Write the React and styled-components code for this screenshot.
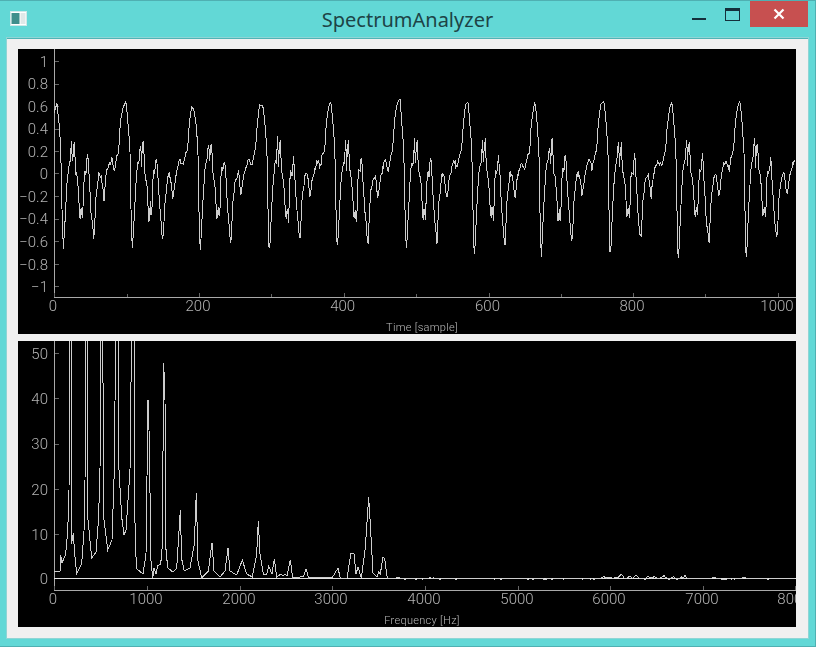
import React from "react";
import styled, { createGlobalStyle } from "styled-components";

const GlobalStyle = createGlobalStyle`
  html, body {
    margin: 0;
    padding: 0;
    background: #62d8d6;
  }
`;

const Window = styled.div`
  box-sizing: border-box;
  width: 816px;
  height: 647px;
  padding: 0 7px 8px 7px;
  display: flex;
  flex-direction: column;
  background: #62d8d6;
  border: solid #4fb0b2;
  border-width: 1px 1px 1px 0;
  overflow: hidden;
`;

const TitleBar = styled.div`
  height: 37px;
  flex: none;
  display: grid;
  grid-template-columns: 1fr auto 1fr;
`;

const AppIcon = styled.svg`
  width: 17px;
  height: 15px;
  margin: 10px 0 0 3px;
`;

const Title = styled.div`
  font-family: "Noto Sans", sans-serif;
  font-size: 20px;
  line-height: 38px;
  color: #1d4446;
`;

const Controls = styled.div`
  display: flex;
  justify-content: flex-end;
  align-items: flex-start;
`;

const MinButton = styled.div`
  width: 14px;
  height: 2px;
  margin: 17px 19px 0 0;
  background: #14303c;
`;

const MaxButton = styled.div`
  box-sizing: border-box;
  width: 15px;
  height: 13px;
  margin: 7px 10px 0 0;
  border: 1px solid #14303c;
  border-top-width: 3px;
`;

const CloseButton = styled.div`
  width: 58px;
  height: 26px;
  display: flex;
  align-items: center;
  justify-content: center;
  background: #c75050;
`;

const Client = styled.div`
  flex: 1;
  min-height: 0;
  box-sizing: border-box;
  padding: 10px 11px 11px 11px;
  display: flex;
  flex-direction: column;
  gap: 7px;
  background: #f0f0f0;
  border-top: 1px solid #50b4b6;
  outline: 1px solid #8fd5d5;
`;

const PlotFrame = styled.svg`
  display: block;
  flex: none;
  width: 778px;
  height: ${(p) => p.$height}px;
  background: #000;
`;

const Trace = styled.polyline`
  fill: none;
  stroke: #cdcdcd;
  stroke-width: 1;
  shape-rendering: crispEdges;
`;

const Axis = styled.line`
  stroke: #a9a9a9;
  stroke-width: 1;
  shape-rendering: crispEdges;
`;

const ZeroLine = styled.line`
  stroke: #e2e2e2;
  stroke-width: 1;
  shape-rendering: crispEdges;
`;

const Tick = styled.line`
  stroke: #666;
  stroke-width: 1;
  shape-rendering: crispEdges;
`;

const TickLabel = styled.text`
  font-family: Roboto, "Liberation Sans", sans-serif;
  font-weight: 300;
  font-size: 15px;
  fill: #b4b4b4;
  filter: grayscale(1);
  text-anchor: ${(p) => p.$anchor || "middle"};
`;

const AxisTitle = styled.text`
  font-family: Roboto, "Liberation Sans", sans-serif;
  font-weight: 300;
  font-size: 11px;
  letter-spacing: 0.3px;
  fill: #bcbcbc;
  filter: grayscale(1);
  text-anchor: middle;
`;

const rnd = (i) => {
  const v = Math.sin(i * 12.9898) * 43758.5453;
  return v - Math.floor(v);
};

// one pitch period, traced from the waveform: dx from the peak, y on the page
const PERIOD = [
  [0, 102], [2.3, 127], [4, 153], [4.7, 200], [6.3, 252], [8.3, 217], [10, 183],
  [11.3, 167], [13.3, 160], [14.7, 136], [15.5, 168], [16, 150], [17.6, 138],
  [18.3, 168], [19.3, 173], [21, 183], [23, 221], [24.3, 206], [25.5, 222],
  [27.3, 170], [29, 173], [30.6, 154], [32.3, 183], [34.3, 217], [37, 243],
  [39, 200], [42, 175], [44.6, 176], [47, 199], [49.3, 175], [52.3, 165],
  [54.6, 160], [57.3, 169], [59.6, 156], [61.6, 150], [63.3, 123], [65.6, 107],
];

const PEAKS = [57, 126, 194, 263, 331, 400, 468, 535, 604, 672, 740];
const PEAK_Y = [103, 101, 110, 106, 102, 98, 102, 101, 101, 102, 101];
const TROUGH_Y = [251, 251, 251, 256, 252, 254, 262, 259, 262, 267, 263];

// 1024 samples over 741px
const SAMPLE_STEP = 0.724;

const wavePoints = () => {
  const knots = [[54, 113]];
  PEAKS.forEach((px, p) => {
    PERIOD.forEach(([dx, y], i) => {
      let yy = y + (rnd(p * 77 + i + 3) - 0.5) * 6;
      if (i === 0) yy = PEAK_Y[p];
      if (i === 4) yy = TROUGH_Y[p];
      knots.push([px + dx, yy]);
    });
  });
  const pts = [];
  let k = 0;
  for (let n = 0; n < 1024; n++) {
    const x = 54 + n * SAMPLE_STEP;
    while (k < knots.length - 2 && knots[k + 1][0] < x) k++;
    const [x0, y0] = knots[k];
    const [x1, y1] = knots[k + 1];
    const t = Math.min(1, Math.max(0, (x - x0) / (x1 - x0)));
    const dx = (x - 57 + 68.3) % 68.3;
    const amp = dx > 12 && dx < 60 ? 6 : 0.6;
    pts.push([x, y0 + (y1 - y0) * t + (rnd(n + 11) - 0.5) * amp]);
  }
  return pts;
};

// low end of the spectrum, traced peak by peak
const SPECTRUM_LOW = [
  [54, 571], [60, 571], [60.7, 555], [62, 563], [65.7, 554], [67.7, 531], [69, 494],
  [69.5, 340], [71.5, 340], [71.5, 544], [73.3, 533], [74.7, 554], [76.7, 574],
  [81.7, 564], [84, 531], [85, 481], [86, 340], [87.3, 340], [88, 520], [91.7, 558],
  [96, 552], [98.5, 520], [100, 470], [101, 340], [102.7, 340], [104, 520], [107.7, 550],
  [112, 540], [114.5, 465], [115.5, 340], [118, 340], [119, 470], [121.7, 517],
  [124, 535], [126, 530], [130, 470], [131.5, 340], [134, 340], [134.5, 500],
  [135.7, 553], [137, 569], [143, 574], [146, 554], [148, 400], [149.5, 445],
  [150.7, 558], [152.7, 578], [154, 568], [156, 574], [157.5, 566], [160.7, 564],
  [162.3, 546], [163.7, 363], [165, 400], [165.7, 546], [167.7, 568], [173, 572],
  [176.7, 568], [179.3, 526], [180.3, 510], [181.7, 559], [184.3, 571], [190, 568],
  [194.3, 544], [196.3, 493], [198, 561], [201.7, 578], [208.3, 571], [212, 543],
  [214, 571], [220, 577], [225, 571], [228, 548], [230, 571], [236.7, 575],
  [242.3, 560], [246.7, 574], [252.3, 577], [256.7, 554], [258.3, 521], [260, 554],
  [263.3, 574], [266.7, 574], [268.7, 566], [272, 574], [274.3, 559], [276.7, 577],
  [281, 574], [283, 576], [285, 574], [287, 576], [290.3, 560], [292.7, 578], [300, 577],
  [303.7, 576], [306, 569], [308.7, 578], [320, 577], [332, 578], [338, 568], [340.3, 578],
  [347, 578], [351, 553], [354, 554], [356, 574], [358, 567], [361.3, 578], [365.3, 548],
  [368.7, 497], [370.7, 531], [373, 573], [377, 577], [378.7, 572], [380.3, 574],
  [383, 557], [384.7, 559], [387.3, 578],
];

// small humps of the noise floor: centre, height, half width
const HUMPS = [
  [398, 1, 3], [432, 1, 4], [604, 2, 3], [610, 1.5, 3], [616, 1.5, 3], [621, 5, 4],
  [630, 3, 3], [636, 4, 3], [648, 2, 3], [654, 2, 3], [664, 3, 4], [674, 2, 3],
  [682, 2, 2], [685, 3, 2], [714, 1, 3], [745, 1, 4],
];

const spectrumPoints = () => {
  const pts = [...SPECTRUM_LOW];
  for (let x = 389; x < 796; x += 1.6) {
    const hump = HUMPS.reduce((h, [c, a, w]) => Math.max(h, a * (1 - Math.abs(x - c) / w)), 0);
    pts.push([x, 578.4 - hump + (rnd(x * 3) > 0.85 ? 1 : 0)]);
  }
  return pts;
};

const toPoints = (pts) => pts.map(([x, y]) => `${x.toFixed(1)},${y.toFixed(1)}`).join(" ");

const TIME_Y = [
  ["1", 61], ["0.8", 83.5], ["0.6", 106], ["0.4", 128.5], ["0.2", 151], ["0", 173],
  ["\u22120.2", 196], ["\u22120.4", 218.5], ["\u22120.6", 241], ["\u22120.8", 264], ["\u22121", 286],
];
const TIME_X = [[0, 54], [200, 199], [400, 343.7], [600, 488.5], [800, 633], [1000, 778]];
const TIME_MINOR = [127, 271, 416, 561, 705];

const FREQ_Y = [["50", 353], ["40", 398], ["30", 443.5], ["20", 489], ["10", 534], ["0", 578]];
const FREQ_X = [
  [0, 54], [1000, 147], [2000, 240], [3000, 332], [4000, 425],
  [5000, 518], [6000, 610], [7000, 703], [8000, 795],
];

function Plot({ top, height, axisY, yTicks, xTicks, minor, label, labelY, children }) {
  return (
    <PlotFrame $height={height} viewBox={`18 ${top} 778 ${height}`}>
      <Axis x1={54.5} y1={top} x2={54.5} y2={axisY + 0.5} />
      <Axis x1={54} y1={axisY + 0.5} x2={796} y2={axisY + 0.5} />
      {yTicks.map(([text, y]) => (
        <g key={text}>
          <Tick x1={55} y1={Math.round(y) + 0.5} x2={59} y2={Math.round(y) + 0.5} />
          <TickLabel x={48} y={y + 5.5} $anchor="end">{text}</TickLabel>
        </g>
      ))}
      {xTicks.map(([text, x]) => (
        <g key={text}>
          <Tick x1={Math.round(x) + 0.5} y1={axisY} x2={Math.round(x) + 0.5} y2={axisY - 4} />
          <TickLabel x={x - 1} y={axisY + 14}>{text}</TickLabel>
        </g>
      ))}
      {minor.map((x) => (
        <Tick key={x} x1={x + 0.5} y1={axisY} x2={x + 0.5} y2={axisY - 3} />
      ))}
      {children}
      <AxisTitle x={422} y={labelY}>{label}</AxisTitle>
    </PlotFrame>
  );
}

export default function App() {
  return (
    <>
      <GlobalStyle />
      <Window>
        <TitleBar>
          <AppIcon viewBox="0 0 17 15">
            <rect x="0.5" y="0.5" width="16" height="14" fill="#fff" stroke="#cfe8e8" />
            <rect x="1.5" y="2" width="8" height="11" fill="#3f8f8c" />
            <rect x="10.5" y="2" width="5" height="11" fill="#dfe8e8" />
          </AppIcon>
          <Title>SpectrumAnalyzer</Title>
          <Controls>
            <MinButton />
            <MaxButton />
            <CloseButton>
              <svg width="12" height="12" viewBox="0 0 12 12">
                <path d="M1.5 1.5 L10.5 10.5 M10.5 1.5 L1.5 10.5" stroke="#fff" strokeWidth="2.2" />
              </svg>
            </CloseButton>
          </Controls>
        </TitleBar>
        <Client>
          <Plot
            top={49}
            height={285}
            axisY={297}
            yTicks={TIME_Y}
            xTicks={TIME_X}
            minor={TIME_MINOR}
            label="Time [sample]"
            labelY={331}
          >
            <Trace points={toPoints(wavePoints())} />
          </Plot>
          <Plot
            top={341}
            height={286}
            axisY={590}
            yTicks={FREQ_Y}
            xTicks={FREQ_X}
            minor={[]}
            label="Frequency [Hz]"
            labelY={624}
          >
            <ZeroLine x1={54} y1={578.5} x2={796} y2={578.5} />
            <Trace points={toPoints(spectrumPoints())} />
          </Plot>
        </Client>
      </Window>
    </>
  );
}
